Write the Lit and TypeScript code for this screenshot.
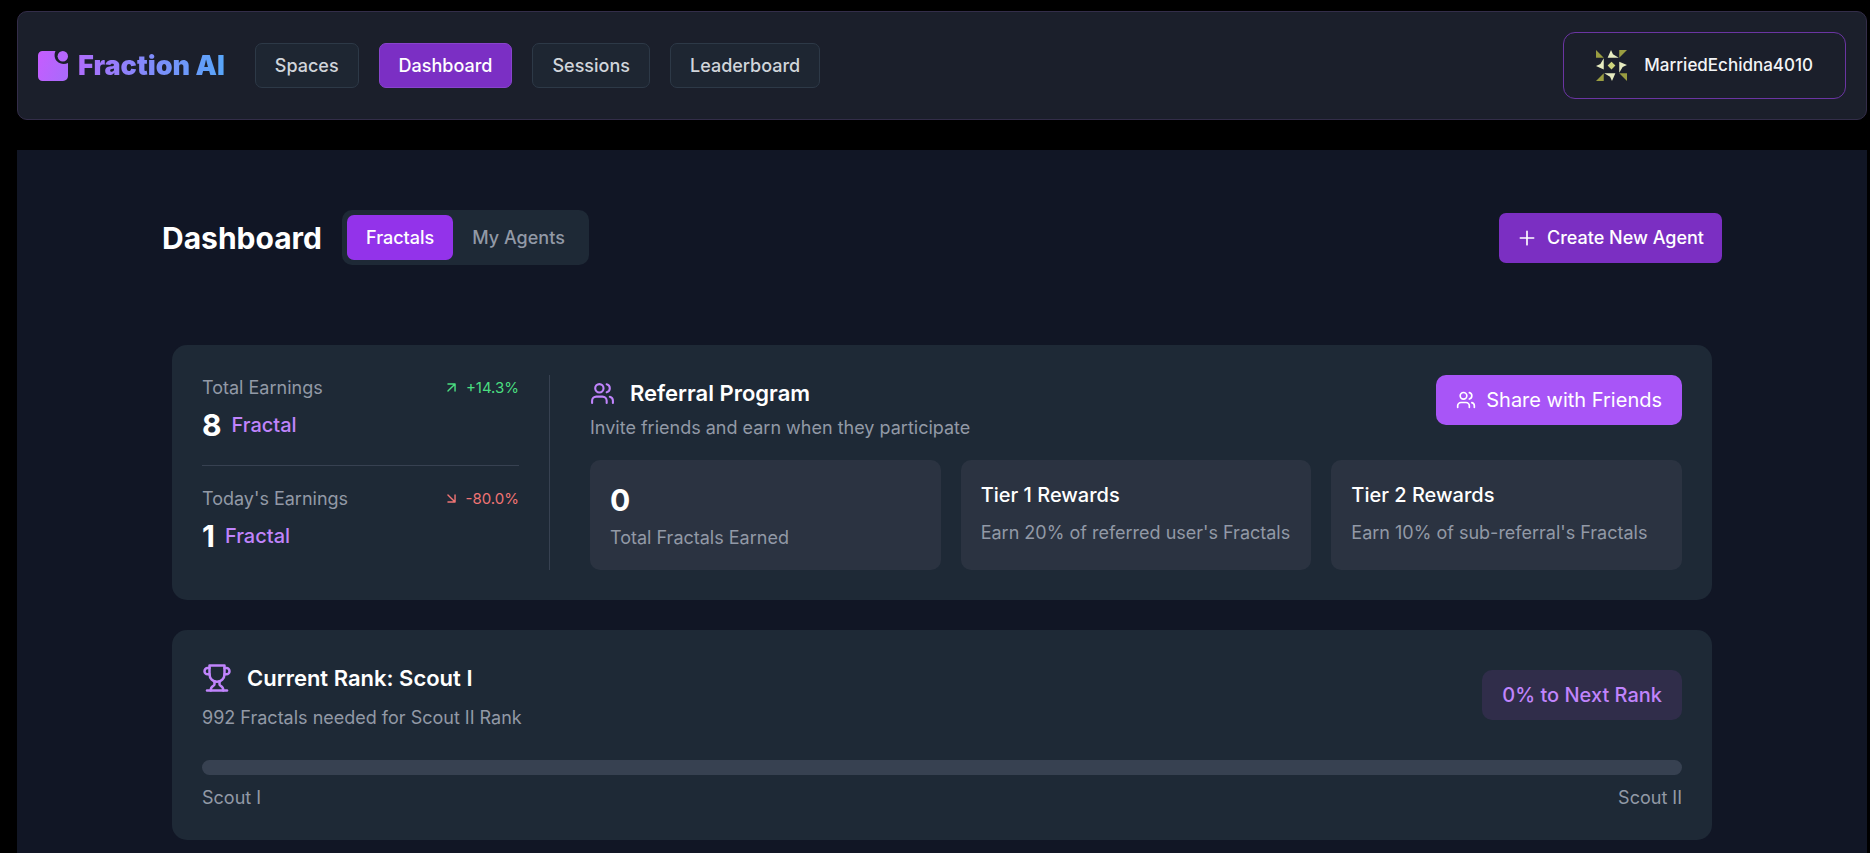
import { LitElement, html, css, svg } from "lit";
import { customElement, property, state } from "lit/decorators.js";
import { classMap } from "lit/directives/class-map.js";

const usersIcon = (size: number) => html`
  <svg class="icon" width=${size} height=${size} viewBox="0 0 24 24" aria-hidden="true">
    <path d="M16 21v-2a4 4 0 0 0-4-4H6a4 4 0 0 0-4 4v2" />
    <circle cx="9" cy="7" r="4" />
    <path d="M22 21v-2a4 4 0 0 0-3-3.87" />
    <path d="M16 3.13a4 4 0 0 1 0 7.75" />
  </svg>
`;

const trophyIcon = html`
  <svg class="icon" width="30" height="30" viewBox="0 0 24 24" aria-hidden="true">
    <path d="M6 9H4.5a2.5 2.5 0 0 1 0-5H6" />
    <path d="M18 9h1.5a2.5 2.5 0 0 0 0-5H18" />
    <path d="M4 22h16" />
    <path d="M10 14.66V17c0 .55-.47.98-.97 1.21C7.85 18.75 7 20.24 7 22" />
    <path d="M14 14.66V17c0 .55.47.98.97 1.21C16.15 18.75 17 20.24 17 22" />
    <path d="M18 2H6v7a6 6 0 0 0 12 0V2Z" />
  </svg>
`;

const plusIcon = html`
  <svg class="icon" width="20" height="20" viewBox="0 0 24 24" aria-hidden="true">
    <path d="M4 12h16M12 4v16" />
  </svg>
`;

const logoMark = html`
  <svg width="30" height="30" viewBox="0 0 30 30" aria-hidden="true">
    <defs>
      <linearGradient id="mark" x1="0" y1="0" x2="1" y2="0.4">
        <stop offset="0" stop-color="#c65cff" />
        <stop offset="1" stop-color="#ac69fb" />
      </linearGradient>
    </defs>
    <path
      fill="url(#mark)"
      d="M4.500 0H17.500C16 3 16.200 7.500 19 10.300C22 13.200 26.500 13.700 30 12V25a5 5 0 0 1-5 5H4.500A4.500 4.500 0 0 1 0 25.500V4.500A4.500 4.500 0 0 1 4.500 0Z"
    />
    <circle cx="24.800" cy="5.200" r="5.200" fill="#b566fb" />
  </svg>
`;

const avatarSide = (angle: number) => svg`
  <g transform="rotate(${angle} 16 16)">
    <path fill="#9a9d41" d="M0 0L8 8H0Z" />
    <path fill="#e6ebc0" d="M15.500 0L17.500 4.500L23.500 8H12Z" />
  </g>
`;

const avatar = html`
  <svg width="31" height="31" viewBox="0 0 32 32" aria-hidden="true">
    ${[0, 90, 180, 270].map(avatarSide)}
    <path fill="#cdd47c" d="M16 12L20 16L16 20L12 16Z" />
  </svg>
`;

const base = css`
  * {
    box-sizing: border-box;
  }
  h1,
  h2,
  h3,
  p {
    margin: 0;
  }
  button {
    font: inherit;
    border: 0;
    cursor: pointer;
  }
  svg {
    display: block;
    flex: none;
  }
  .icon {
    fill: none;
    stroke: currentColor;
    stroke-width: 2;
    stroke-linecap: round;
    stroke-linejoin: round;
  }
`;

@customElement("site-header")
class SiteHeader extends LitElement {
  static styles = [
    base,
    css`
      :host {
        display: block;
      }
      .bar {
        display: flex;
        align-items: center;
        justify-content: space-between;
        padding: 20px;
        background: #1b1f2b;
        border: 1px solid #332d49;
        border-radius: 10px;
      }
      .left,
      .links {
        display: flex;
        align-items: center;
      }
      .left {
        gap: 30px;
      }
      .links {
        gap: 20px;
      }
      .brand {
        display: flex;
        align-items: center;
        gap: 10px;
        text-decoration: none;
      }
      .word {
        font-size: 27px;
        line-height: 30px;
        font-weight: 900;
        background: linear-gradient(90deg, #ae6dfb, #7f8cfb 50%, #58a6f9);
        -webkit-background-clip: text;
        background-clip: text;
        color: transparent;
      }
      .link {
        padding: 9px 19px;
        border: 1px solid #2d3947;
        border-radius: 7px;
        background: #1e2632;
        color: #d1d5db;
        font-weight: 500;
        line-height: 25px;
        text-decoration: none;
      }
      .link.active {
        background: #7b2fc4;
        border-color: #8844cc;
        color: #fff;
      }
      .user {
        display: flex;
        align-items: center;
        gap: 17px;
        padding: 15px 32px;
        border: 1px solid #6b35a3;
        border-radius: 12px;
        background: transparent;
        color: #f3f4f6;
        font-size: 17px;
        font-weight: 500;
        line-height: 35px;
      }
    `,
  ];

  @property() current = "Dashboard";

  render() {
    const links = ["Spaces", "Dashboard", "Sessions", "Leaderboard"];
    return html`
      <header class="bar">
        <div class="left">
          <a class="brand" href="#">${logoMark}<span class="word">Fraction AI</span></a>
          <nav class="links">
            ${links.map(
              (name) => html`<a
                class=${classMap({ link: true, active: name === this.current })}
                href="#${name.toLowerCase()}"
                >${name}</a
              >`
            )}
          </nav>
        </div>
        <button class="user" type="button">${avatar}<span>MarriedEchidna4010</span></button>
      </header>
    `;
  }
}

@customElement("earning-stat")
class EarningStat extends LitElement {
  static styles = [
    base,
    css`
      :host {
        display: block;
      }
      .top {
        display: flex;
        justify-content: space-between;
        align-items: center;
        color: #9299a6;
        line-height: 25px;
      }
      .trend {
        display: flex;
        align-items: center;
        gap: 6px;
        font-size: 15px;
        color: #4ade80;
      }
      .trend.down {
        color: #f07474;
      }
      .value {
        display: flex;
        align-items: center;
        gap: 10px;
        margin-top: 5px;
        line-height: 40px;
      }
      .number {
        font-size: 30px;
        font-weight: 700;
        color: #fff;
      }
      .unit {
        font-size: 20px;
        font-weight: 500;
        color: #c084fc;
      }
    `,
  ];

  @property() label = "";
  @property() amount = "";
  @property() change = "";

  render() {
    const down = this.change.startsWith("-");
    return html`
      <div class="top">
        <span>${this.label}</span>
        <span class=${classMap({ trend: true, down })}>
          <svg class="icon" width="17" height="17" viewBox="0 0 24 24" aria-hidden="true">
            <path d=${down ? "M7 7l10 10M17 7v10H7" : "M7 7h10v10M7 17L17 7"} />
          </svg>
          ${this.change}
        </span>
      </div>
      <div class="value">
        <span class="number">${this.amount}</span>
        <span class="unit">Fractal</span>
      </div>
    `;
  }
}

@customElement("app-root")
class AppRoot extends LitElement {
  static styles = [
    base,
    css`
      :host {
        display: flex;
        flex-direction: column;
        gap: 30px;
        box-sizing: border-box;
        min-height: 100vh;
        padding: 11px 3px 0 17px;
        background: #000;
        color: #fff;
        font-family: Inter, "Liberation Sans", sans-serif;
        font-size: 18px;
        line-height: 25px;
      }
      main {
        flex: 1;
        padding: 60px 20px 13px;
        background: #111625;
      }
      .container {
        max-width: 1560px;
        margin: 0 auto;
      }
      .heading {
        display: flex;
        align-items: center;
        justify-content: space-between;
      }
      .title-group {
        display: flex;
        align-items: center;
        gap: 20px;
      }
      h1 {
        font-size: 30px;
        line-height: 40px;
        font-weight: 700;
      }
      .tabs {
        display: flex;
        padding: 5px;
        border-radius: 10px;
        background: #1e2936;
      }
      .tab {
        padding: 10px 19px;
        border-radius: 7px;
        background: transparent;
        color: #9299a6;
        font-weight: 500;
      }
      .tab.active {
        background: #9333ea;
        color: #fff;
      }
      .create,
      .share {
        display: flex;
        align-items: center;
        gap: 10px;
        color: #fff;
        line-height: 30px;
      }
      .create {
        padding: 10px 18px;
        border-radius: 7px;
        background: #7b2fc2;
        font-weight: 500;
      }
      .share {
        padding: 10px 20px;
        border-radius: 10px;
        background: #a855f7;
        font-size: 20px;
      }
      .cards {
        display: grid;
        gap: 30px;
        margin-top: 80px;
        padding: 0 10px;
      }
      .card {
        padding: 30px;
        border-radius: 15px;
        background: #1e2936;
      }
      .overview {
        display: flex;
        gap: 40px;
      }
      .earnings {
        flex: 0 0 348px;
        padding-right: 30px;
        border-right: 1px solid #374151;
      }
      .earnings earning-stat + earning-stat {
        margin-top: 20px;
        padding-top: 20px;
        border-top: 1px solid #374151;
      }
      .referral {
        flex: 1;
      }
      .row {
        display: flex;
        justify-content: space-between;
        align-items: flex-start;
      }
      .row.middle {
        align-items: center;
      }
      h2 {
        display: flex;
        align-items: center;
        gap: 15px;
        font-size: 22px;
        line-height: 36px;
        font-weight: 600;
      }
      h2 .icon {
        color: #c084fc;
      }
      .note {
        color: #9299a6;
      }
      .referral h2 + .note {
        margin-top: 4px;
      }
      .rank h2 + .note {
        margin-top: 9px;
      }
      .tiers {
        display: grid;
        grid-template-columns: repeat(3, 1fr);
        gap: 20px;
        margin-top: 20px;
      }
      .tier {
        padding: 20px;
        border-radius: 10px;
        background: #2b3341;
      }
      .big {
        margin-bottom: 5px;
        font-size: 30px;
        line-height: 40px;
        font-weight: 700;
      }
      h3 {
        margin-bottom: 10px;
        font-size: 20px;
        line-height: 30px;
        font-weight: 500;
      }
      .badge {
        padding: 10px 20px;
        border-radius: 10px;
        background: #302d4a;
        color: #c084fc;
        font-size: 20px;
        line-height: 30px;
        font-weight: 500;
      }
      .track {
        height: 15px;
        margin: 30px 0 10px;
        border-radius: 8px;
        background: #374151;
        overflow: hidden;
      }
      .fill {
        height: 100%;
        background: #a855f7;
      }
    `,
  ];

  @state() private tab = "Fractals";
  @state() private progress = 0;

  render() {
    return html`
      <site-header></site-header>
      <main>
        <div class="container">
          <div class="heading">
            <div class="title-group">
              <h1>Dashboard</h1>
              <div class="tabs" role="tablist">
                ${["Fractals", "My Agents"].map(
                  (name) => html`<button
                    type="button"
                    role="tab"
                    aria-selected=${name === this.tab}
                    class=${classMap({ tab: true, active: name === this.tab })}
                    @click=${() => (this.tab = name)}
                  >
                    ${name}
                  </button>`
                )}
              </div>
            </div>
            <button class="create" type="button">${plusIcon}<span>Create New Agent</span></button>
          </div>

          <div class="cards">
            <section class="card overview">
              <div class="earnings">
                <earning-stat label="Total Earnings" amount="8" change="+14.3%"></earning-stat>
                <earning-stat label="Today's Earnings" amount="1" change="-80.0%"></earning-stat>
              </div>
              <div class="referral">
                <div class="row">
                  <div>
                    <h2>${usersIcon(25)}<span>Referral Program</span></h2>
                    <p class="note">Invite friends and earn when they participate</p>
                  </div>
                  <button class="share" type="button">
                    ${usersIcon(20)}<span>Share with Friends</span>
                  </button>
                </div>
                <div class="tiers">
                  <div class="tier">
                    <p class="big">0</p>
                    <p class="note">Total Fractals Earned</p>
                  </div>
                  <div class="tier">
                    <h3>Tier 1 Rewards</h3>
                    <p class="note">Earn 20% of referred user's Fractals</p>
                  </div>
                  <div class="tier">
                    <h3>Tier 2 Rewards</h3>
                    <p class="note">Earn 10% of sub-referral's Fractals</p>
                  </div>
                </div>
              </div>
            </section>

            <section class="card rank">
              <div class="row middle">
                <div>
                  <h2>${trophyIcon}<span>Current Rank: Scout I</span></h2>
                  <p class="note">992 Fractals needed for Scout II Rank</p>
                </div>
                <span class="badge">${this.progress}% to Next Rank</span>
              </div>
              <div
                class="track"
                role="progressbar"
                aria-label="Progress to next rank"
                aria-valuenow=${this.progress}
              >
                <div class="fill" style="width:${this.progress}%"></div>
              </div>
              <div class="row">
                <span class="note">Scout I</span>
                <span class="note">Scout II</span>
              </div>
            </section>
          </div>
        </div>
      </main>
    `;
  }
}
